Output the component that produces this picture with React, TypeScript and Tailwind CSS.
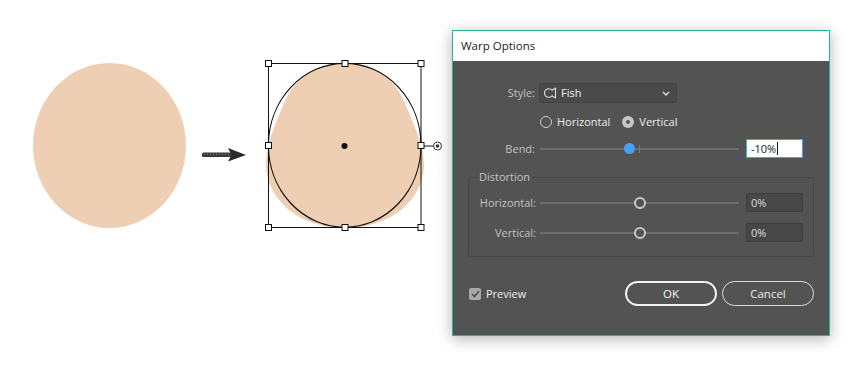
import React from "react";

const font = { fontFamily: '"Open Sans", "Noto Sans", sans-serif' };

function Artwork() {
  const hx = [268.5, 345, 421];
  const hy = [63.5, 145.5, 227.5];
  return (
    <svg width="452" height="372" viewBox="0 0 452 372" className="shrink-0">
      {/* original circle */}
      <ellipse cx="109.5" cy="145.5" rx="76.5" ry="82.5" fill="#efcfb3" />

      {/* arrow */}
      <rect x="202" y="152.5" width="30" height="4.5" rx="1.5" fill="#3a3a3a" />
      <line x1="204" y1="154.3" x2="230" y2="154.3" stroke="#8f8f8f" strokeWidth="1" strokeDasharray="1 2" />
      <path d="M228 148 L246 155 L228 161.5 L231.5 155 Z" fill="#2a2a2a" />

      {/* warped shape */}
      <path
        d="M345 63 C381 63 398 84 407 108 C416 130 425 148 424 167 C422 200 391 228 345 228 C299 228 268 200 266 167 C265 148 273 130 282 108 C291 84 309 63 345 63 Z"
        fill="#efcfb3"
      />
      <ellipse cx="344.7" cy="145.3" rx="76.3" ry="82" fill="none" stroke="#111" strokeWidth="1.2" />

      {/* bounding box */}
      <rect x="268.5" y="63.5" width="152.5" height="164" fill="none" stroke="#111" strokeWidth="1" />
      {hy.map((y) =>
        hx.map((x) =>
          x === 345 && y === 145.5 ? null : (
            <rect key={`${x}-${y}`} x={x - 3} y={y - 3} width="6" height="6" fill="#fff" stroke="#111" strokeWidth="1" />
          )
        )
      )}
      <circle cx="344.5" cy="146" r="3" fill="#111" />
      <line x1="424" y1="146" x2="433.5" y2="146" stroke="#111" strokeWidth="1" />
      <circle cx="437.5" cy="146" r="4" fill="#fff" stroke="#333" strokeWidth="1" />
      <circle cx="437.5" cy="146" r="1.8" fill="#333" />
    </svg>
  );
}

function Slider({ value, active }: { value: number; active?: boolean }) {
  const pct = (value + 100) / 2;
  return (
    <div className="relative w-[199px] h-[14px] flex items-center">
      <div className="w-full h-[2px] bg-[#6c6c6c]" />
      {active && <div className="absolute left-[99px] top-[3px] w-[1px] h-[8px] bg-[#7a7a7a]" />}
      {active ? (
        <div
          className="absolute top-[1.5px] w-[11px] h-[11px] -ml-[5.5px] rounded-full bg-[#4a9ff5]"
          style={{ left: `${pct}%` }}
        />
      ) : (
        <div
          className="absolute top-[1px] w-[12px] h-[12px] -ml-[6px] rounded-full border-2 border-[#c8c8c8] bg-[#535353]"
          style={{ left: `${pct}%` }}
        />
      )}
    </div>
  );
}

function FishIcon() {
  return (
    <svg width="13" height="12" viewBox="0 0 13 12" className="shrink-0">
      <path
        d="M8 3.2 A4.3 4.3 0 1 0 8 8.8 L11.5 11 L11.5 1 Z"
        fill="none"
        stroke="#dcdcdc"
        strokeWidth="1.1"
        strokeLinejoin="round"
      />
    </svg>
  );
}

function WarpDialog() {
  return (
    <div
      className="mt-[30px] w-[378px] h-[306px] border border-[#22b59d] bg-[#535353] flex flex-col shadow-[0_3px_14px_rgba(0,0,0,0.3)] text-[11px] leading-[14px]"
      style={font}
    >
      <div className="h-[30px] bg-white flex items-center pl-[8px] text-[#1a1a1a] text-[11.5px]">Warp Options</div>

      <div className="flex flex-col">
        {/* Style */}
        <div className="flex items-center mt-[22px] h-[20px]">
          <div className="w-[82px] text-right text-[#c2c2c2]">Style:</div>
          <div className="ml-[4px] w-[138px] h-[20px] bg-[#4a4a4a] border border-[#424242] rounded-[2px] flex items-center pl-[4px] pr-[6px]">
            <FishIcon />
            <span className="ml-[4px] text-[#f0f0f0]">Fish</span>
            <svg width="8" height="5" viewBox="0 0 8 5" className="ml-auto">
              <path d="M1 1 L4 4 L7 1" fill="none" stroke="#e8e8e8" strokeWidth="1.3" />
            </svg>
          </div>
        </div>

        {/* Orientation */}
        <div className="flex items-center mt-[12px] h-[14px] pl-[87px] text-[#ececec]">
          <div className="w-[12px] h-[12px] rounded-full border-[1.5px] border-[#cfcfcf]" />
          <span className="ml-[5px]">Horizontal</span>
          <div className="ml-[12px] w-[12px] h-[12px] rounded-full bg-[#c6c6c6] flex items-center justify-center">
            <div className="w-[4px] h-[4px] rounded-full bg-[#555]" />
          </div>
          <span className="ml-[5px]">Vertical</span>
        </div>

        {/* Bend */}
        <div className="flex items-center mt-[10px] h-[19px]">
          <div className="w-[82px] text-right text-[#c2c2c2]">Bend:</div>
          <div className="ml-[5px]">
            <Slider value={-10} active />
          </div>
          <div className="ml-[7px] w-[57px] h-[19px] bg-white border border-[#4a9ff5] flex items-center pl-[4px] text-[#222]">
            -10%
            <span className="ml-[1px] w-[1px] h-[13px] bg-[#111]" />
          </div>
        </div>

        {/* Distortion */}
        <fieldset className="mt-[12px] ml-[15px] mr-[15px] border border-[#474747] rounded-[3px] p-0 pb-[14px]">
          <legend className="ml-[8px] px-[2px] text-[#c2c2c2]">Distortion</legend>
          <div className="flex items-center mt-[9px] h-[19px]">
            <div className="w-[67px] text-right text-[#c2c2c2]">Horizontal:</div>
            <div className="ml-[4px]">
              <Slider value={0} />
            </div>
            <div className="ml-[7px] w-[57px] h-[19px] bg-[#474747] border border-[#3e3e3e] rounded-[2px] flex items-center pl-[4px] text-[#dedede]">
              0%
            </div>
          </div>
          <div className="flex items-center mt-[11px] h-[19px]">
            <div className="w-[67px] text-right text-[#c2c2c2]">Vertical:</div>
            <div className="ml-[4px]">
              <Slider value={0} />
            </div>
            <div className="ml-[7px] w-[57px] h-[19px] bg-[#474747] border border-[#3e3e3e] rounded-[2px] flex items-center pl-[4px] text-[#dedede]">
              0%
            </div>
          </div>
        </fieldset>

        {/* Footer */}
        <div className="flex items-center mt-[24px] h-[25px] pl-[16px] pr-[15px]">
          <div className="w-[12px] h-[12px] rounded-[2px] bg-[#a9a9a9] flex items-center justify-center">
            <svg width="9" height="8" viewBox="0 0 9 8">
              <path d="M1 4 L3.5 6.5 L8 1.2" fill="none" stroke="#4f4f4f" strokeWidth="1.6" />
            </svg>
          </div>
          <span className="ml-[5px] text-[#ececec]">Preview</span>
          <button className="ml-auto w-[92px] h-[25px] rounded-full border-2 border-[#f2f2f2] text-[#f5f5f5] text-[11.5px]">
            OK
          </button>
          <button className="ml-[5px] w-[92px] h-[25px] rounded-full border border-[#dcdcdc] text-[#ececec] text-[11.5px]">
            Cancel
          </button>
        </div>
      </div>
    </div>
  );
}

export default function App() {
  return (
    <div className="w-[850px] h-[372px] bg-white flex items-start overflow-hidden">
      <Artwork />
      <WarpDialog />
    </div>
  );
}
